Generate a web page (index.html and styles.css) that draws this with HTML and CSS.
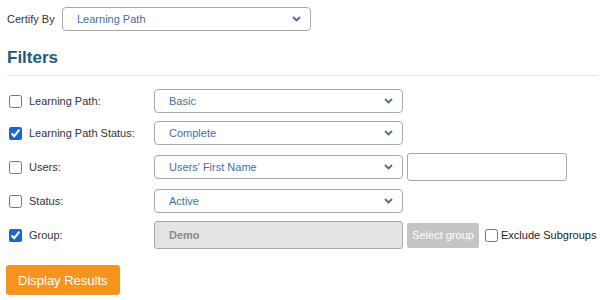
FILE: index.html
```html
<!DOCTYPE html>
<html lang="en">

<head>
  <meta charset="UTF-8" />
  <title>Certification Report</title>
  <link rel="stylesheet" href="styles.css">
</head>

<body>
  <div class="page">
    <div class="certify-row">
      <label class="certify-label" for="certify">Certify By</label>
      <select id="certify" class="select select-certify">
        <option>Learning Path</option>
      </select>
    </div>

    <h2 class="section-title">Filters</h2>

    <div class="filters">
      <div class="filter-row">
        <label class="filter-label"><input type="checkbox" class="check"> Learning Path:</label>
        <select class="select"><option>Basic</option></select>
      </div>

      <div class="filter-row">
        <label class="filter-label"><input type="checkbox" class="check" checked> Learning Path Status:</label>
        <select class="select"><option>Complete</option></select>
      </div>

      <div class="filter-row tall">
        <label class="filter-label"><input type="checkbox" class="check"> Users:</label>
        <select class="select"><option>Users' First Name</option></select>
        <input type="text" class="text-input">
      </div>

      <div class="filter-row">
        <label class="filter-label"><input type="checkbox" class="check"> Status:</label>
        <select class="select"><option>Active</option></select>
      </div>

      <div class="filter-row tall">
        <label class="filter-label"><input type="checkbox" class="check" checked> Group:</label>
        <input type="text" class="group-input" value="Demo" disabled>
        <button class="btn-group" disabled>Select group</button>
        <label class="exclude"><input type="checkbox" class="check"> Exclude Subgroups</label>
      </div>
    </div>

    <button class="btn-primary">Display Results</button>
  </div>
</body>

</html>
```

FILE: styles.css
```css
:root {
  --text: #333333;
  --link: #3f6f9f;
  --heading: #1d5b7e;
  --border: #a9a9a9;
  --orange: #f7941d;
  --check: #1767d2;
}

* {
  box-sizing: border-box;
}

body {
  margin: 0;
  font-family: 'Liberation Sans', Arial, sans-serif;
  font-size: 11px;
  color: var(--text);
  background: #ffffff;
}

.page {
  padding: 7px 2px 0 7px;
}

.certify-row {
  display: flex;
  align-items: center;
  gap: 7px;
}

.certify-label {
  width: 48px;
  white-space: nowrap;
}

.select {
  appearance: none;
  -webkit-appearance: none;
  width: 249px;
  height: 24px;
  padding: 0 28px 0 14px;
  border: 1px solid var(--border);
  border-radius: 4px;
  background-color: #ffffff;
  background-image: url("data:image/svg+xml,%3Csvg xmlns='http://www.w3.org/2000/svg' width='9' height='6' viewBox='0 0 9 6'%3E%3Cpath d='M1 1l3.5 3.5L8 1' fill='none' stroke='%233f6f9f' stroke-width='1.8'/%3E%3C/svg%3E");
  background-repeat: no-repeat;
  background-position: right 9px center;
  font-family: inherit;
  font-size: 11px;
  color: var(--link);
}

.section-title {
  margin: 17px 0 0;
  padding-bottom: 7px;
  border-bottom: 1px solid #e6e6e6;
  font-size: 17px;
  font-weight: 700;
  color: var(--heading);
}

.filters {
  display: flex;
  flex-direction: column;
  gap: 8px;
  padding-top: 13px;
}

.filter-row {
  display: flex;
  align-items: center;
  height: 24px;
  white-space: nowrap;
}

.filter-row.tall {
  height: 28px;
}

.filter-label {
  display: flex;
  align-items: center;
  gap: 7px;
  width: 147px;
  padding-left: 2px;
}

.check {
  flex-shrink: 0;
  width: 13px;
  height: 13px;
  margin: 0;
  accent-color: var(--check);
}

.text-input {
  width: 160px;
  height: 28px;
  margin-left: 4px;
  border: 1px solid var(--border);
  border-radius: 3px;
}

.group-input {
  width: 249px;
  height: 28px;
  padding: 0 14px;
  border: 1px solid var(--border);
  border-radius: 3px;
  background: #e4e4e4;
  font-family: inherit;
  font-size: 11px;
  font-weight: 700;
  color: #8a8a8a;
}

.btn-group {
  width: 72px;
  height: 25px;
  margin-left: 4px;
  padding: 0;
  border: none;
  border-radius: 2px;
  background: #c4c4c4;
  font-family: inherit;
  font-size: 11px;
  color: #ffffff;
  white-space: nowrap;
}

.exclude {
  display: flex;
  align-items: center;
  gap: 3px;
  margin-left: 6px;
  font-size: 11px;
  color: #222222;
}

.btn-primary {
  margin-top: 16px;
  margin-left: -1px;
  height: 30px;
  padding: 0 12px;
  border: none;
  border-radius: 3px;
  background: var(--orange);
  font-family: inherit;
  font-size: 13px;
  color: #ffffff;
}
```
